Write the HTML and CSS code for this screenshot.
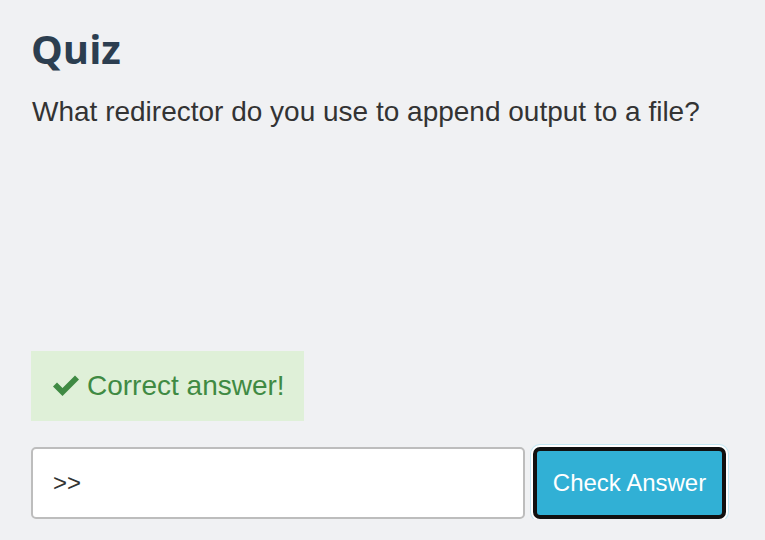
FILE: index.html
```html
<!DOCTYPE html>
<html>
<head>
<meta charset="utf-8">
<link rel="stylesheet" href="styles.css">
</head>
<body>
<div class="quiz">
  <h1 class="title">Quiz</h1>
  <p class="question">What redirector do you use to append output to a file?</p>
  <div class="alert">
    <svg class="check" viewBox="0 0 28 24" width="28" height="24"><path d="M1 13.5 L5 9.5 L10.5 15 L23 2.5 L27 6.5 L10.5 23 Z" fill="#3f8a43"/></svg>
    <span>Correct answer!</span>
  </div>
  <div class="answer-row">
    <div class="input">&gt;&gt;</div>
    <button class="btn">Check Answer</button>
  </div>
</div>
</body>
</html>
```
FILE: styles.css
```css
html, body {
  margin: 0;
  padding: 0;
  background: #f0f1f3;
}
.quiz {
  padding: 24px 0 0 31px;
  width: 696px;
  font-family: "Liberation Sans", Arial, sans-serif;
}
.title {
  margin: 0;
  font-family: "Open Sans", sans-serif;
  font-weight: 700;
  font-size: 40px;
  line-height: 50px;
  color: #2c3e50;
  padding-left: 0;
}
.question {
  margin: 20px 0 0 1px;
  font-size: 28px;
  line-height: 36px;
  color: #333;
  height: 257px;
}
.alert {
  width: 273px;
  height: 70px;
  box-sizing: border-box;
  background: #dff0d8;
  color: #3f8a43;
  display: flex;
  align-items: center;
  padding-left: 21px;
  font-size: 28px;
  gap: 7px;
}
.check {
  display: block;
  margin-top: -2px;
}
.answer-row {
  display: flex;
  margin-top: 26px;
  gap: 8px;
}
.input {
  width: 494px;
  height: 72px;
  box-sizing: border-box;
  background: #fff;
  border: 2px solid #bdbdbd;
  border-radius: 5px;
  font-family: "Liberation Sans", Arial, sans-serif;
  font-size: 24px;
  color: #333;
  padding: 0 0 0 20px;
  display: flex;
  align-items: center;
}
.btn {
  width: 193px;
  height: 72px;
  box-sizing: border-box;
  background: #31b0d5;
  color: #fff;
  border: 4px solid #111;
  border-radius: 7px;
  box-shadow: 0 0 0 2px #fff, 0 0 0 3px #c4e8f3;
  font-family: "Liberation Sans", Arial, sans-serif;
  font-size: 24px;
  padding: 0;
}
```
